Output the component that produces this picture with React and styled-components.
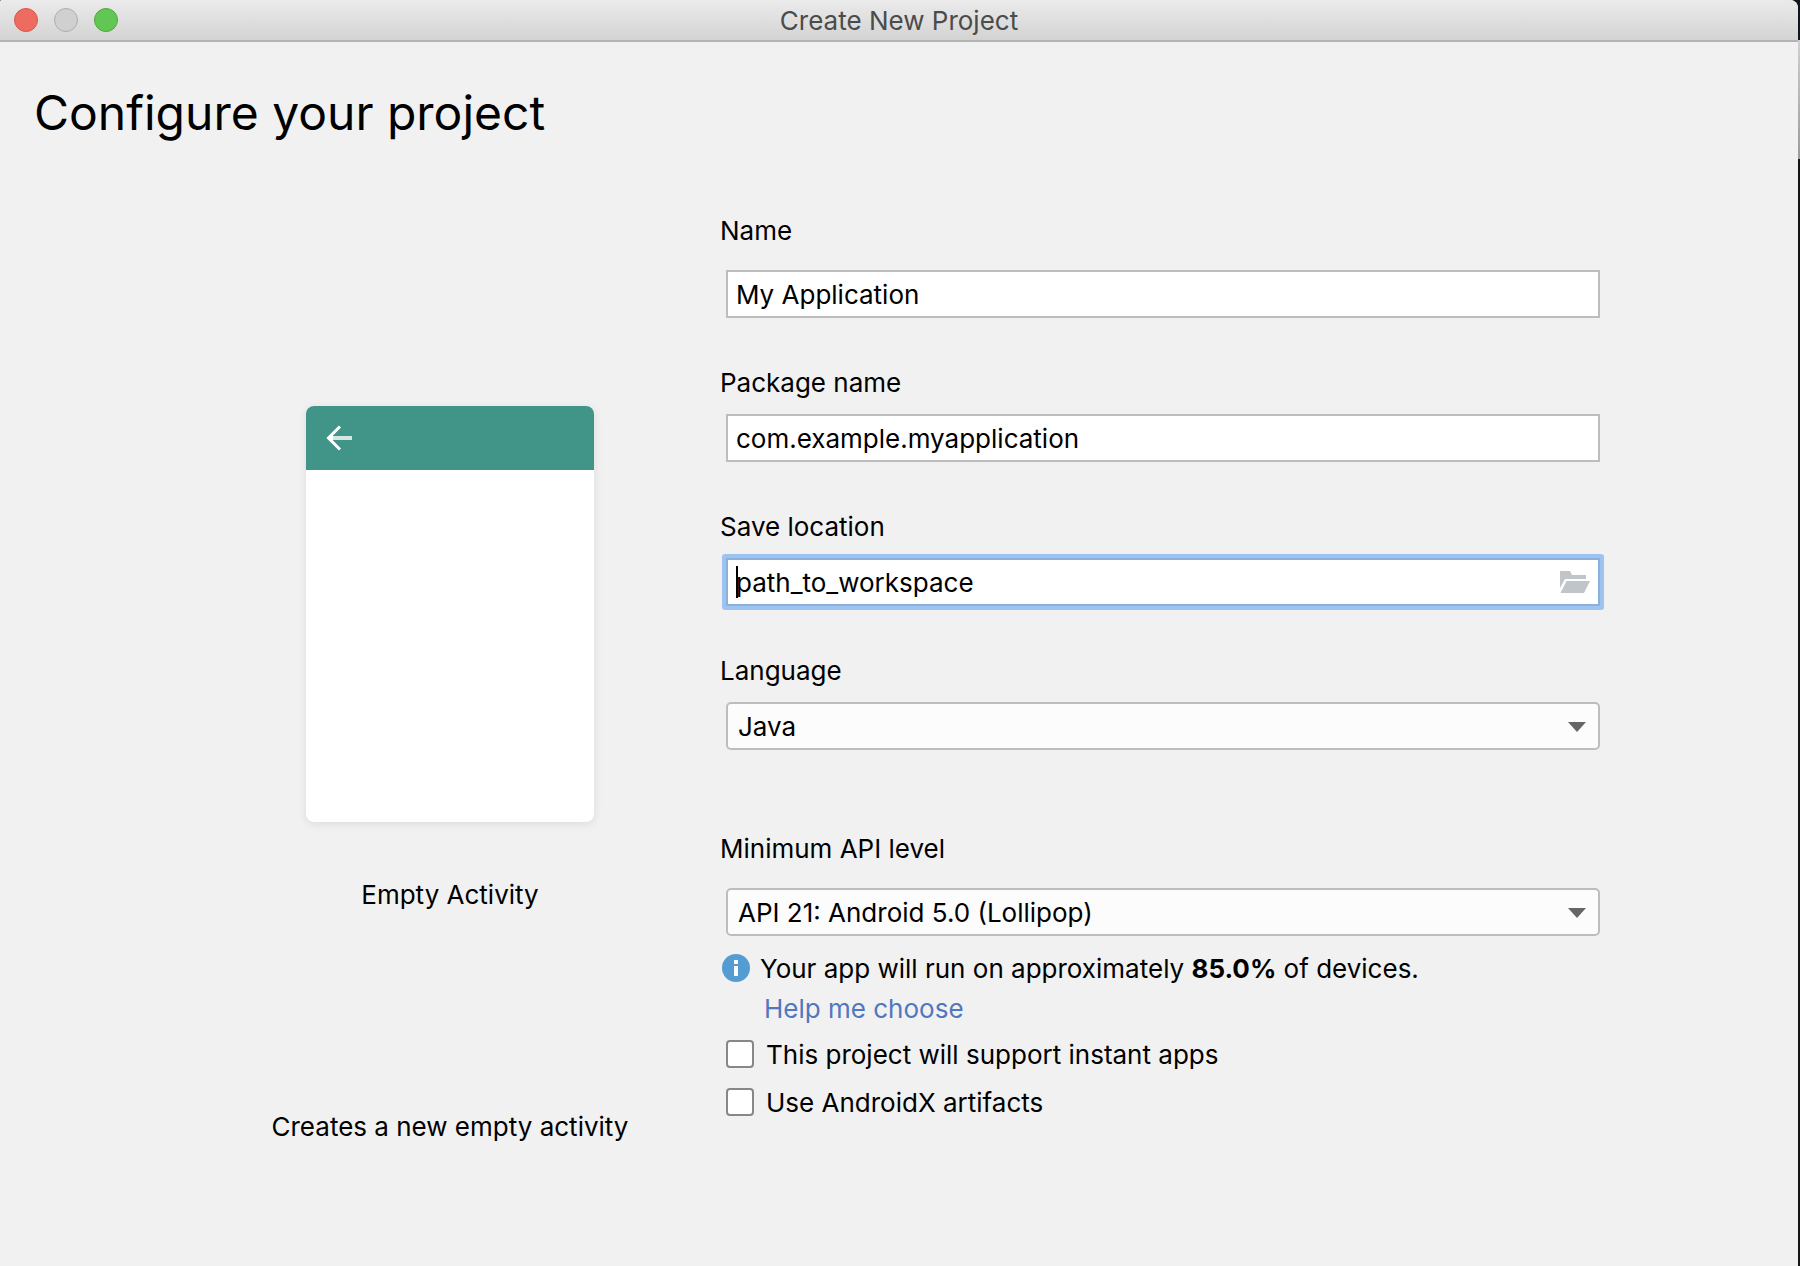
import React, { useState } from "react";
import styled, { createGlobalStyle, css } from "styled-components";

const GlobalStyle = createGlobalStyle`
  *, *::before, *::after { box-sizing: border-box; }
  body {
    margin: 0;
    background: #15171c;
    color: #000;
    font-family: Inter, "Noto Sans", sans-serif;
    font-size: 26px;
    line-height: 34px;
  }
  button, input, select { font: inherit; color: inherit; margin: 0; }
`;

const Desktop = styled.div`
  display: flex;
  min-height: 100vh;
  background: #12161e;
`;

const DesktopEdge = styled.div`
  flex: none;
  width: 2px;
  background: linear-gradient(
    #10151e 40px,
    #cfcfcf 40px,
    #9a9a9a 159px,
    #151515 159px
  );
`;

const Window = styled.div`
  flex: 1;
  min-width: 0;
  display: flex;
  flex-direction: column;
  background: #f1f1f1;
  border-radius: 2px 8px 0 0;
  overflow: hidden;
`;

const TitleBar = styled.header`
  display: grid;
  grid-template-columns: 1fr auto 1fr;
  align-items: center;
  height: 42px;
  padding: 0 14px;
  background: linear-gradient(#ebebeb, #d3d3d3);
  border-bottom: 2px solid #b3b3b3;
`;

const WindowControls = styled.div`
  display: flex;
  gap: 16px;
`;

const ControlDot = styled.button`
  width: 24px;
  height: 24px;
  padding: 0;
  border: 1px solid ${(p) => p.$edge};
  border-radius: 50%;
  background: ${(p) => p.$fill};
`;

const WindowTitle = styled.div`
  padding-top: 2px;
  color: #4b4b4b;
`;

const Heading = styled.h1`
  margin: 0;
  padding: 40px 34px 0;
  font-size: 48px;
  line-height: 62px;
  font-weight: 400;
`;

const Content = styled.main`
  display: grid;
  grid-template-columns: 540px minmax(0, 1fr);
  padding: 70px 198px 48px 180px;

  @media (max-width: 1300px) {
    grid-template-columns: minmax(0, 1fr);
    gap: 48px;
    padding: 48px 34px;
  }
`;

const Template = styled.section`
  display: flex;
  flex-direction: column;
  align-items: center;
  padding-top: 192px;
  text-align: center;

  @media (max-width: 1300px) {
    padding-top: 0;
  }
`;

const Preview = styled.div`
  width: 288px;
  height: 416px;
  border-radius: 8px;
  overflow: hidden;
  background: #fff;
  box-shadow: 0 2px 10px rgba(0, 0, 0, 0.09);
`;

const PreviewBar = styled.div`
  display: flex;
  align-items: center;
  height: 64px;
  padding: 0 20px;
  background: #419488;
`;

const TemplateName = styled.h2`
  margin: 0;
  padding-top: 56px;
  font-size: 26px;
  font-weight: 400;
`;

const TemplateNote = styled.p`
  margin: 0;
  padding-top: 198px;
`;

const Form = styled.form`
  min-width: 0;
`;

const Field = styled.div`
  display: flex;
  flex-direction: column;
  gap: ${(p) => (p.$roomy ? 22 : 14)}px;
  margin-bottom: ${(p) => p.$after}px;
`;

const FieldLabel = styled.label`
  align-self: flex-start;
`;

const boxed = css`
  height: 48px;
  margin-left: 6px;
  border: 2px solid #bdbdbd;
`;

const TextBox = styled.div`
  ${boxed}
  position: relative;
  display: flex;
  align-items: center;
  padding: 0 8px;
  background: #fff;
  ${(p) =>
    p.$focused &&
    css`
      border-color: #8cb0dc;
      border-radius: 1px;
      box-shadow: 0 0 0 4px #9dc3f0;
    `}
`;

const TextInput = styled.input`
  flex: 1;
  min-width: 0;
  height: 44px;
  padding: 0;
  border: 0;
  outline: 0;
  background: transparent;
`;

const Caret = styled.span`
  position: absolute;
  left: 8px;
  top: 6px;
  width: 2px;
  height: 32px;
  background: #000;
`;

const BrowseButton = styled.button`
  display: flex;
  padding: 0;
  border: 0;
  background: none;
`;

const SelectBox = styled.div`
  ${boxed}
  position: relative;
  border-radius: 5px;
  background: #fcfcfc;

  svg {
    position: absolute;
    right: 12px;
    top: 18px;
    pointer-events: none;
  }
`;

const Select = styled.select`
  display: block;
  width: 100%;
  height: 44px;
  padding: 2px 40px 0 10px;
  border: 0;
  outline: 0;
  appearance: none;
  background: transparent;
`;

const InfoRow = styled.p`
  display: flex;
  align-items: flex-start;
  gap: 10px;
  margin: 16px 0 6px;
  padding-left: 2px;

  svg {
    flex: none;
    margin-top: 2px;
  }
`;

const HelpLink = styled.a`
  display: table;
  margin: 0 0 12px 44px;
  color: #5177be;
  text-decoration: none;
`;

const CheckRow = styled.label`
  display: flex;
  align-items: flex-start;
  gap: 12px;
  margin: 0 0 14px 6px;
`;

const CheckBox = styled.input`
  && {
    appearance: none;
    flex: none;
    width: 28px;
    height: 28px;
    margin: 2px 0 0;
    border: 2px solid #878787;
    border-radius: 4px;
    background: #fff;
  }

  &&:checked {
    background: #549dd3;
  }
`;

const BackArrow = () => (
  <svg width="26" height="26" viewBox="0 0 26 26" aria-hidden="true">
    <path d="M7 13H26" stroke="#fff" strokeOpacity="0.78" strokeWidth="4" />
    <path d="M14 1.5L2.5 13L14 24.5" fill="none" stroke="#fff" strokeWidth="3" />
    <path d="M1 13L7 8V18Z" fill="#fff" />
  </svg>
);

const FolderIcon = () => (
  <svg width="30" height="22" viewBox="0 0 30 22" fill="#bfc5c8" aria-hidden="true">
    <path d="M0 0H10L12 4H26V8H5L0 17Z" />
    <path d="M6.5 10H30L24 22H0.5Z" />
  </svg>
);

const DropArrow = () => (
  <svg width="18" height="10" viewBox="0 0 18 10" aria-hidden="true">
    <path d="M0 0H18L9 10Z" fill="#666" />
  </svg>
);

const InfoIcon = () => (
  <svg width="28" height="28" viewBox="0 0 28 28" aria-hidden="true">
    <circle cx="14" cy="14" r="14" fill="#549dd3" />
    <path d="M12 6H16V10H12ZM12 12H16V22H12Z" fill="#fff" />
  </svg>
);

function SelectField({ id, label, options, roomy, after }) {
  return (
    <Field $roomy={roomy} $after={after}>
      <FieldLabel htmlFor={id}>{label}</FieldLabel>
      <SelectBox>
        <Select id={id} defaultValue={options[0]}>
          {options.map((o) => (
            <option key={o}>{o}</option>
          ))}
        </Select>
        <DropArrow />
      </SelectBox>
    </Field>
  );
}

export default function App() {
  const [name, setName] = useState("My Application");
  const [pkg, setPkg] = useState("com.example.myapplication");
  const [path, setPath] = useState("path_to_workspace");

  return (
    <Desktop>
      <GlobalStyle />
      <Window>
        <TitleBar>
          <WindowControls>
            <ControlDot type="button" aria-label="Close" $fill="#ed6b5f" $edge="#d9564b" />
            <ControlDot type="button" aria-label="Minimize" $fill="#d0d0d0" $edge="#adadad" />
            <ControlDot type="button" aria-label="Zoom" $fill="#62c655" $edge="#50a73f" />
          </WindowControls>
          <WindowTitle>Create New Project</WindowTitle>
        </TitleBar>
        <Heading>Configure your project</Heading>
        <Content>
          <Template>
            <Preview>
              <PreviewBar>
                <BackArrow />
              </PreviewBar>
            </Preview>
            <TemplateName>Empty Activity</TemplateName>
            <TemplateNote>Creates a new empty activity</TemplateNote>
          </Template>
          <Form onSubmit={(e) => e.preventDefault()}>
            <Field $roomy $after={48}>
              <FieldLabel htmlFor="name">Name</FieldLabel>
              <TextBox>
                <TextInput id="name" value={name} onChange={(e) => setName(e.target.value)} />
              </TextBox>
            </Field>
            <Field $after={48}>
              <FieldLabel htmlFor="package">Package name</FieldLabel>
              <TextBox>
                <TextInput id="package" value={pkg} onChange={(e) => setPkg(e.target.value)} />
              </TextBox>
            </Field>
            <Field $after={48}>
              <FieldLabel htmlFor="location">Save location</FieldLabel>
              <TextBox $focused>
                <TextInput id="location" value={path} onChange={(e) => setPath(e.target.value)} />
                <Caret />
                <BrowseButton type="button" aria-label="Browse">
                  <FolderIcon />
                </BrowseButton>
              </TextBox>
            </Field>
            <SelectField id="language" label="Language" options={["Java"]} after={82} />
            <SelectField
              id="api"
              label="Minimum API level"
              options={["API 21: Android 5.0 (Lollipop)"]}
              roomy
              after={0}
            />
            <InfoRow>
              <InfoIcon />
              <span>
                Your app will run on approximately <b>85.0%</b> of devices.
              </span>
            </InfoRow>
            <HelpLink href="#help">Help me choose</HelpLink>
            <CheckRow>
              <CheckBox type="checkbox" />
              This project will support instant apps
            </CheckRow>
            <CheckRow>
              <CheckBox type="checkbox" />
              Use AndroidX artifacts
            </CheckRow>
          </Form>
        </Content>
      </Window>
      <DesktopEdge />
    </Desktop>
  );
}
